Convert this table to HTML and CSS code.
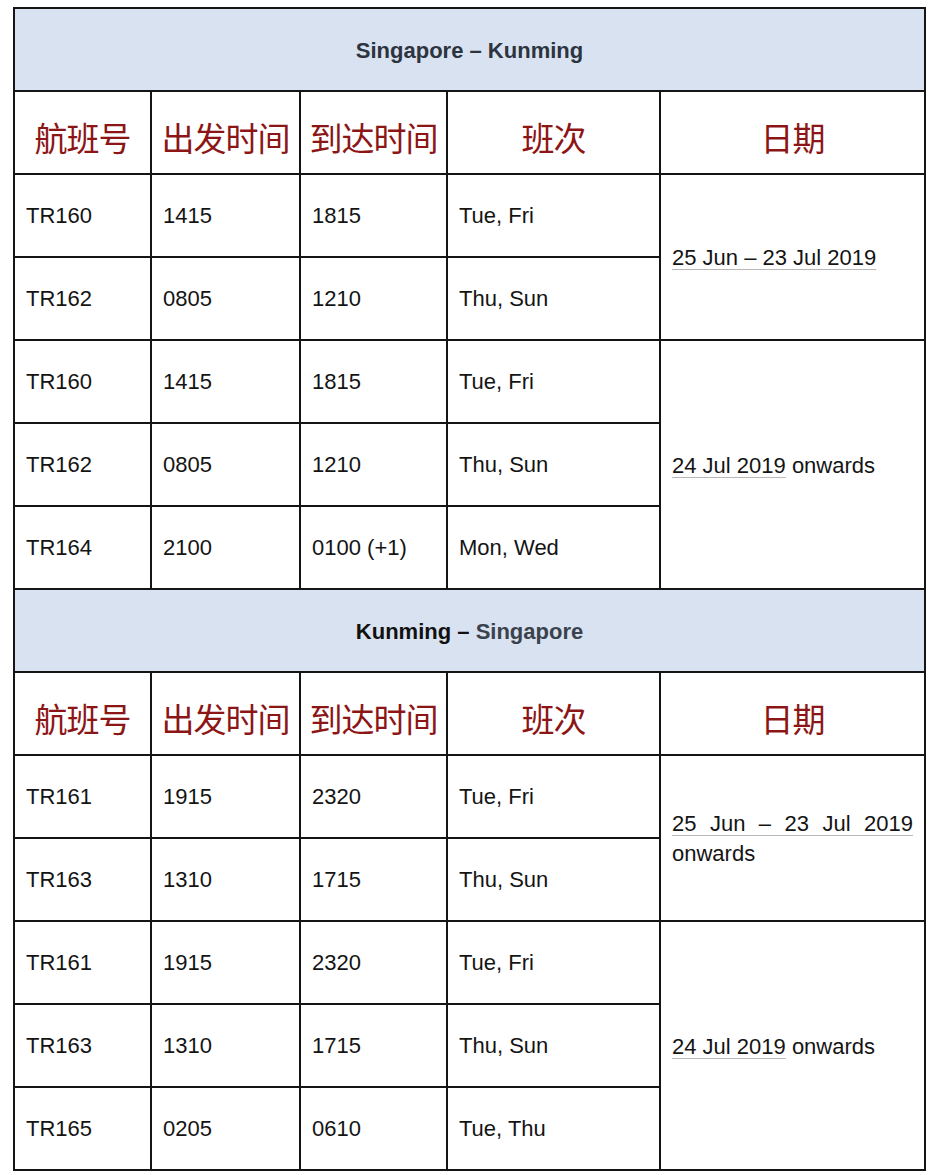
FILE: index.html
```html
<!DOCTYPE html>
<html lang="zh">
<head>
<meta charset="utf-8">
<title>Singapore – Kunming</title>
<link rel="stylesheet" href="styles.css">
</head>
<body>
<table class="sched">
  <colgroup>
    <col class="c1"><col class="c2"><col class="c3"><col class="c4"><col class="c5">
  </colgroup>
  <tbody>
    <tr class="route"><td colspan="5"><span class="r-a">Singapore – Kunming</span></td></tr>
    <tr class="head">
      <td>航班号</td><td>出发时间</td><td>到达时间</td><td>班次</td><td>日期</td>
    </tr>
    <tr><td>TR160</td><td>1415</td><td>1815</td><td>Tue, Fri</td><td rowspan="2" class="date"><span class="u">25 Jun – 23 Jul 2019</span></td></tr>
    <tr><td>TR162</td><td>0805</td><td>1210</td><td>Thu, Sun</td></tr>
    <tr><td>TR160</td><td>1415</td><td>1815</td><td>Tue, Fri</td><td rowspan="3" class="date"><span class="u">24 Jul 2019</span> onwards</td></tr>
    <tr><td>TR162</td><td>0805</td><td>1210</td><td>Thu, Sun</td></tr>
    <tr><td>TR164</td><td>2100</td><td>0100 (+1)</td><td>Mon, Wed</td></tr>

    <tr class="route"><td colspan="5"><span class="r-b">Kunming –</span> <span class="r-c">Singapore</span></td></tr>
    <tr class="head">
      <td>航班号</td><td>出发时间</td><td>到达时间</td><td>班次</td><td>日期</td>
    </tr>
    <tr><td>TR161</td><td>1915</td><td>2320</td><td>Tue, Fri</td><td rowspan="2" class="date just"><span class="u">25 Jun – 23 Jul 2019</span> onwards</td></tr>
    <tr><td>TR163</td><td>1310</td><td>1715</td><td>Thu, Sun</td></tr>
    <tr><td>TR161</td><td>1915</td><td>2320</td><td>Tue, Fri</td><td rowspan="3" class="date"><span class="u">24 Jul 2019</span> onwards</td></tr>
    <tr><td>TR163</td><td>1310</td><td>1715</td><td>Thu, Sun</td></tr>
    <tr><td>TR165</td><td>0205</td><td>0610</td><td>Tue, Thu</td></tr>
  </tbody>
</table>
</body>
</html>
```
FILE: styles.css
```css
html, body {
  margin: 0;
  padding: 0;
  background: #ffffff;
}

body {
  padding: 7px 0 0 13px;
  font-family: "Liberation Sans", Arial, sans-serif;
  color: #141414;
}

.sched {
  border-collapse: collapse;
  table-layout: fixed;
  width: 911px;
}

.c1 { width: 137px; }
.c2 { width: 149px; }
.c3 { width: 147px; }
.c4 { width: 213px; }
.c5 { width: 265px; }

.sched td {
  border: 2px solid #151515;
  height: 81px;
  padding: 0 11px;
  font-size: 22px;
  line-height: 30px;
  vertical-align: middle;
  text-align: left;
}

.sched .route td {
  height: 79px;
  background: #d9e2f0;
  text-align: center;
  font-weight: bold;
  font-size: 22px;
  padding-top: 2px;
}

.r-a { color: #2c3440; }
.r-b { color: #111111; }
.r-c { color: #3a424d; }

.sched .head td {
  height: 73px;
  text-align: center;
  padding: 8px 0 0 0;
  font-family: "Noto Sans CJK SC", "Noto Sans", sans-serif;
  font-size: 33px;
  line-height: 40px;
  color: #8c1616;
  letter-spacing: -1px;
}

.sched td.date {
  padding-top: 2px;
}

.sched td.just {
  text-align: justify;
}

.u {
  text-decoration: underline;
  text-decoration-color: #b8b8b8;
  text-decoration-thickness: 1px;
  text-underline-offset: 4px;
}
```
